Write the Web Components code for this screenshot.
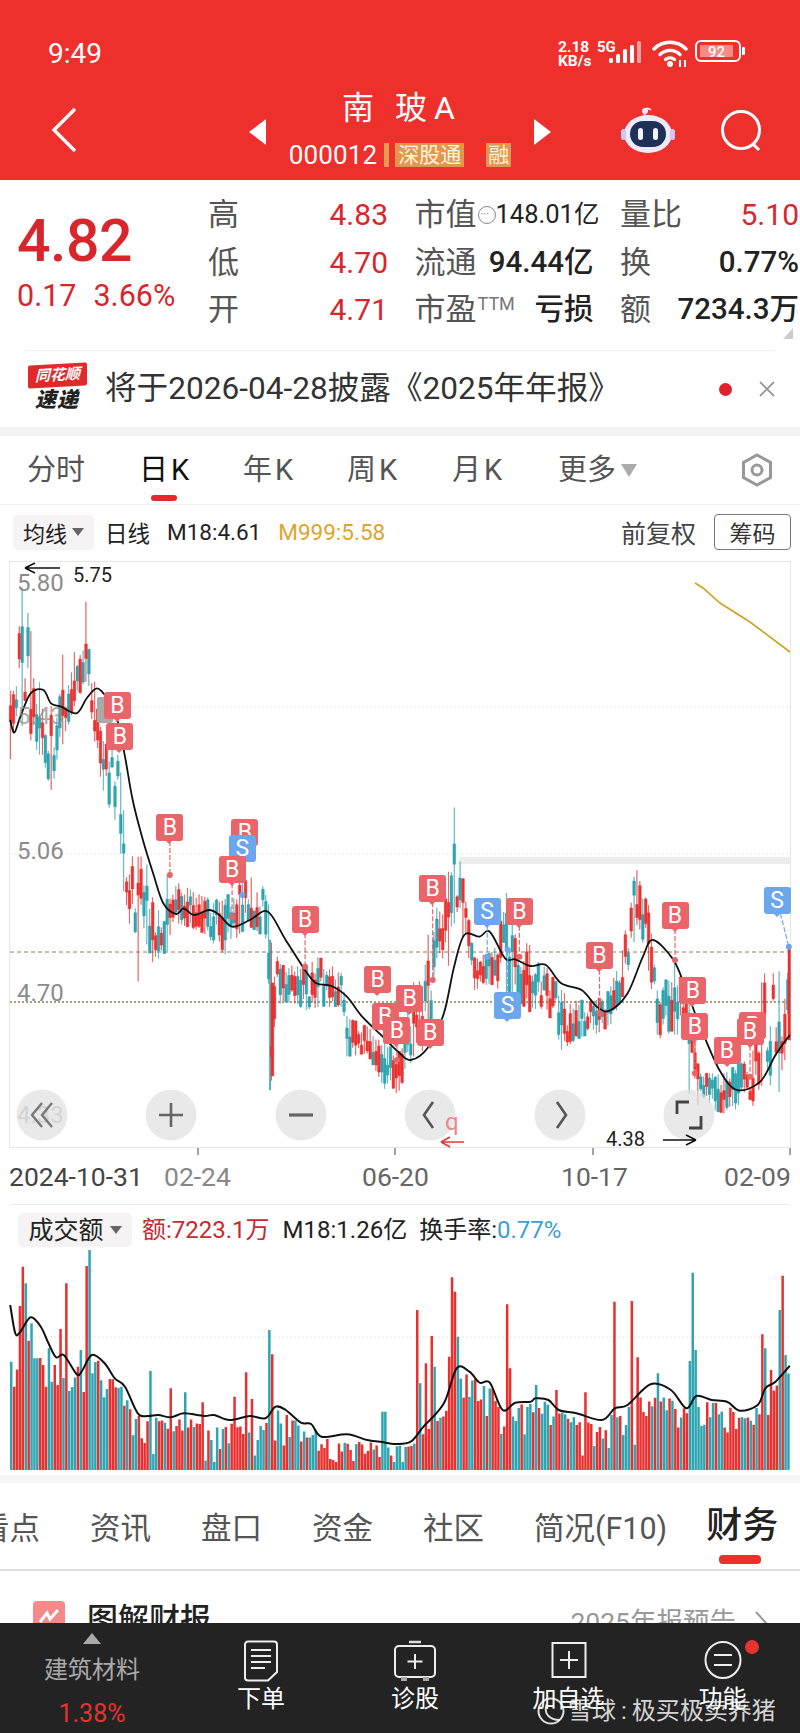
<!DOCTYPE html>
<html>
<head>
<meta charset="utf-8">
<style>
  html,body{margin:0;padding:0;background:#fff;}
  body{width:800px;height:1733px;overflow:hidden;display:flex;flex-direction:column;font-family:Roboto,"Noto Sans CJK SC",sans-serif;color:#333;}
</style>
</head>
<body>
<stock-header></stock-header>
<quote-panel></quote-panel>
<news-bar></news-bar>
<period-tabs></period-tabs>
<kline-toolbar></kline-toolbar>
<kline-chart></kline-chart>
<volume-panel></volume-panel>
<section-tabs></section-tabs>
<section-peek></section-peek>
<bottom-bar></bottom-bar>
<script>
class stockHeader extends HTMLElement{
  constructor(){
    super();
    this.attachShadow({mode:"open"});
    this.shadowRoot.innerHTML = `
    <style>
      :host{display:block;height:180px;background:#ee302d;color:#fff;flex:none;}
      .status{height:85px;box-sizing:border-box;padding:37px 55px 0 48px;display:flex;justify-content:space-between;align-items:flex-start;}
      .time{font-size:28px;line-height:33px;color:#fff;}
      .sys{display:flex;align-items:flex-start;margin-top:3px;}
      .speed{font-size:15.5px;font-weight:700;line-height:13.5px;margin-top:1px;width:39px;}
      .fiveg{font-size:15px;font-weight:700;line-height:13px;margin-top:1px;width:19px;}
      .nav{height:95px;display:grid;grid-template-columns:230px 340px 230px;}
      .back{padding:22px 0 0 50px;}
      .mid{display:flex;flex-direction:column;align-items:center;position:relative;}
      .name{font-size:32px;line-height:44px;white-space:pre;margin:1px 0 0 -3px;display:flex;}
      .name span:nth-child(1){margin-right:21px;}
      .name span:nth-child(2){margin-right:7px;}
      .code{display:flex;align-items:center;margin-top:10px;}
      .num{font-size:26px;line-height:30px;letter-spacing:.1px;}
      .bar{width:5px;height:24px;background:#e89a4f;margin:0 6px 0 7px;}
      .tag{background:#e0974f;color:#fff3dc;font-size:21px;line-height:24px;height:24px;padding:0 3px;}
      .tag.r{margin-left:22px;padding:0 2px;}
      .arr{position:absolute;top:34px;width:0;height:0;border-top:13px solid transparent;border-bottom:13px solid transparent;}
      .arr.l{left:19px;border-right:17px solid #fff;}
      .arr.rr{left:304px;border-left:17px solid #fff;}
      .right{display:flex;align-items:flex-start;padding:20px 0 0 48px;}
    </style>
    <div class="status">
      <span class="time">9:49</span>
      <div class="sys">
        <div class="speed">2.18<br>KB/s</div>
        <span class="fiveg">5G</span>
        <svg width="33" height="24" viewBox="0 0 33 24" style="margin-left:-7px"><g fill="#fff"><rect x="0" y="18" width="4" height="5" rx="1.5"/><rect x="7" y="14" width="4" height="9" rx="1.5"/><rect x="14" y="9" width="4" height="14" rx="1.5"/><rect x="21" y="5" width="4" height="18" rx="1.5"/><rect x="28" y="1" width="4" height="22" rx="1.5" opacity=".55"/></g></svg>
        <svg width="38" height="28" viewBox="0 0 38 28" style="margin-left:10px"><g fill="none" stroke="#fff" stroke-width="3.4" stroke-linecap="round"><path d="M2 9C11 0 25 0 34 9"/><path d="M8 14.5C14 9 22 9 28 14.5"/><path d="M13.5 19.5C16 17.5 20 17.5 22.5 19.5"/></g><circle cx="18" cy="24" r="3" fill="#fff"/><path d="M28 20v7M33 20v7" stroke="#fff" stroke-width="2"/></svg>
        <svg width="50" height="22" viewBox="0 0 50 22" style="margin-left:5px"><rect x="1" y="1" width="44" height="20" rx="5" fill="none" stroke="#fff" stroke-width="2"/><rect x="5" y="5" width="33" height="12" fill="#f78a86"/><rect x="47" y="7" width="3" height="8" rx="1" fill="#fff"/><text x="21.500" y="16.500" font-size="15" font-weight="500" text-anchor="middle" fill="#fff" font-family="Roboto">92</text></svg>
      </div>
    </div>
    <div class="nav">
      <div class="back"><svg width="30" height="46" viewBox="0 0 30 46"><path d="M25 2L4 23L25 44" fill="none" stroke="#fff" stroke-width="3.400"/></svg></div>
      <div class="mid">
        <span class="arr l"></span><span class="arr rr"></span>
        <div class="name"><span>南</span><span>玻</span><span>A</span></div>
        <div class="code"><span class="num">000012</span><span class="bar"></span><span class="tag">深股通</span><span class="tag r">融</span></div>
      </div>
      <div class="right">
        <svg width="60" height="54" viewBox="0 0 60 54"><path d="M27 10c-3-6 2-8 6-5" fill="none" stroke="#e4dcf6" stroke-width="2"/><circle cx="27" cy="6" r="3" fill="#efeaf9"/><ellipse cx="30" cy="29" rx="24" ry="19" fill="#efeaf9"/><rect x="3" y="24" width="5" height="11" rx="2.500" fill="#cfc8ee"/><rect x="52" y="24" width="5" height="11" rx="2.500" fill="#cfc8ee"/><rect x="12" y="16" width="36" height="26" rx="13" fill="#1f3058"/><rect x="20" y="23" width="5" height="12" rx="2.500" fill="#f2f2fb"/><rect x="35" y="23" width="5" height="12" rx="2.500" fill="#f2f2fb"/></svg>
        <svg width="48" height="48" viewBox="0 0 48 48" style="margin-left:40px;margin-top:2px"><circle cx="23" cy="23" r="18.500" fill="none" stroke="#fff" stroke-width="3"/><path d="M35 37L41 43" stroke="#fff" stroke-width="3"/></svg>
      </div>
    </div>`;
  }
}
customElements.define("stock-header", stockHeader);

class quotePanel extends HTMLElement{
  constructor(){
    super();
    this.attachShadow({mode:"open"});
    const rows = [
      ["高","4.83","市值<i></i>","148.01亿","量比","5.10"],
      ["低","4.70","流通","94.44亿","换","0.77%"],
      ["开","4.71","市盈<sup>TTM</sup>","亏损","额","7234.3万"]
    ];
    let cells = "";
    rows.forEach((r,i)=>{
      cells += `<div class="cell"><span class="lb">${r[0]}</span><span class="red">${r[1]}</span></div>
      <div class="cell"><span class="lb">${r[2]}</span><span class="val ${i==0?'sm':''}">${r[3]}</span></div>
      <div class="cell"><span class="lb">${r[4]}</span><span class="${i==0?'red':'val'}">${r[5]}</span></div>`;
    });
    this.shadowRoot.innerHTML = `
    <style>
      :host{display:flex;height:171px;flex:none;position:relative;box-sizing:border-box;}
      .left{width:208px;box-sizing:border-box;padding:28px 0 0 17px;color:#d8262c;}
      .price{font-size:59px;line-height:66px;font-weight:500;letter-spacing:-.5px;}
      .chg{font-size:30.500px;line-height:38px;white-space:nowrap;margin-top:3px;}
      .chg span{margin-left:17px;}
      .grid{display:grid;grid-template-columns:180px 179px 179px;column-gap:26.500px;grid-auto-rows:47.500px;padding-top:11px;width:592px;}
      .cell{display:flex;justify-content:space-between;align-items:center;line-height:47px;white-space:nowrap;}
      .lb{color:#555;display:flex;align-items:center;font-size:31px;}
      .red{color:#d8262c;font-size:30px;}
      .val{color:#222;font-size:29.500px;font-weight:500;}
      .val.sm{font-size:25.500px;font-weight:400;}
      i{display:inline-block;width:18px;height:18px;border:1px solid #888;border-radius:50%;margin-left:1px;box-sizing:border-box;position:relative;}
      i::after{content:"···";position:absolute;left:2px;top:-15px;font-size:11px;font-style:normal;color:#777;line-height:46px;}
      sup{font-size:18px;line-height:18px;color:#777;align-self:flex-start;margin-top:9px;margin-left:1px;}
      .corner{position:absolute;left:783px;top:148px;width:0;height:0;border-bottom:11px solid #ccc;border-left:10px solid transparent;}
      .rule{position:absolute;left:25px;right:25px;bottom:0;height:1px;background:#eee;}
    </style>
    <div class="left">
      <div class="price">4.82</div>
      <div class="chg">0.17<span>3.66%</span></div>
    </div>
    <div class="grid">${cells}</div>
    <span class="corner"></span><span class="rule"></span>`;
  }
}
customElements.define("quote-panel", quotePanel);

class newsBar extends HTMLElement{
  constructor(){
    super();
    this.attachShadow({mode:"open"});
    this.shadowRoot.innerHTML = `
    <style>
      :host{display:flex;align-items:center;height:76px;flex:none;box-sizing:border-box;padding:0 24px 0 27px;}
      .logo{width:60px;display:flex;flex-direction:column;align-items:center;margin-top:-1px;}
      .top{background:#e1292c;color:#fff;font-size:15px;line-height:23px;font-weight:700;font-style:italic;width:59px;text-align:center;transform:skewY(-3deg);border-radius:2px;}
      .bot{color:#222;font-size:21px;line-height:27px;font-weight:900;font-style:italic;letter-spacing:1px;}
      .txt{font-size:31.600px;color:#333;margin-left:18px;white-space:nowrap;flex:1;line-height:40px;}
      .dot{width:13px;height:13px;background:#e0202c;border-radius:50%;margin-right:26px;}
    </style>
    <div class="logo"><span class="top">同花顺</span><span class="bot">速递</span></div>
    <span class="txt">将于2026-04-28披露《2025年年报》</span>
    <span class="dot"></span>
    <svg width="18" height="18" viewBox="0 0 18 18"><path d="M2 2L16 16M16 2L2 16" stroke="#999" stroke-width="1.800"/></svg>`;
  }
}
customElements.define("news-bar", newsBar);

class periodTabs extends HTMLElement{
  constructor(){
    super();
    this.attachShadow({mode:"open"});
    this.shadowRoot.innerHTML = `
    <style>
      :host{display:block;flex:none;height:78px;box-sizing:border-box;border-top:9px solid #f5f5f5;border-bottom:1px solid #eee;position:relative;}
      .row{display:grid;grid-template-columns:112px 104px 104px 105px 106px 170px 1fr;padding-left:27px;height:68px;align-items:center;font-size:29px;color:#555;}
      b{font-weight:400;color:#111;position:relative;}
      .row span,.row b{line-height:68px;white-space:nowrap;}
      em{font-style:normal;margin-left:3px;}
      b::after{content:"";position:absolute;left:12px;top:59px;width:26px;height:6px;border-radius:3px;background:#e5282c;}
      .tri{display:inline-block;width:0;height:0;border-left:8px solid transparent;border-right:8px solid transparent;border-top:13px solid #aaa;margin-left:5px;vertical-align:3px;}
      svg{margin-left:11px;}
    </style>
    <div class="row">
      <span>分时</span><b>日<em>K</em></b><span>年<em>K</em></span><span>周<em>K</em></span><span>月<em>K</em></span>
      <span>更多<i class="tri"></i></span>
      <svg width="36" height="36" viewBox="0 0 36 36"><path d="M18 3L31.500 10.500V25.500L18 33L4.500 25.500V10.500Z" fill="none" stroke="#999" stroke-width="3"/><circle cx="18" cy="18" r="5" fill="none" stroke="#999" stroke-width="3"/></svg>
    </div>`;
  }
}
customElements.define("period-tabs", periodTabs);

class klineToolbar extends HTMLElement{
  constructor(){
    super();
    this.attachShadow({mode:"open"});
    this.shadowRoot.innerHTML = `
    <style>
      :host{display:flex;align-items:center;flex:none;height:56px;box-sizing:border-box;padding:0 9px 2px 13px;font-size:22.500px;color:#222;white-space:nowrap;}
      .sel{background:#f5f3f3;border-radius:5px;width:81px;height:35px;display:flex;align-items:center;justify-content:center;font-size:22px;box-sizing:border-box;}
      .sel i{width:0;height:0;border-left:6px solid transparent;border-right:6px solid transparent;border-top:8px solid #666;margin-left:5px;}
      .a{margin-left:11px;}
      .b{margin-left:17px;}
      .g{margin-left:17px;color:#e0a32e;flex:1;}
      .c{color:#444;font-size:25px;margin-right:18px;}
      .btn{border:1px solid #777;border-radius:4px;width:77px;height:36px;display:flex;align-items:center;justify-content:center;box-sizing:border-box;font-size:23px;color:#333;}
    </style>
    <span class="sel">均线<i></i></span>
    <span class="a">日线</span><span class="b">M18:4.61</span><span class="g">M999:5.58</span>
    <span class="c">前复权</span><span class="btn">筹码</span>`;
  }
}
customElements.define("kline-toolbar", klineToolbar);

// seeded random so the picture stays the same every run
function makeRand(seed){
  return function(){
    seed = (seed*1664525 + 1013904223) % 4294967296;
    return seed/4294967296;
  };
}
function lerpAt(list, x, idx){
  if(x <= list[0][0]) return list[0][idx];
  for(let i=1;i<list.length;i++){
    if(x <= list[i][0]){
      const a = list[i-1], b = list[i];
      return a[idx] + (b[idx]-a[idx])*(x-a[0])/(b[0]-a[0]);
    }
  }
  return list[list.length-1][idx];
}
function smoothPath(pts){
  let d = "M"+pts[0][0].toFixed(1)+" "+pts[0][1].toFixed(1);
  for(let i=1;i<pts.length;i++){
    const p0 = pts[i-2]||pts[i-1], p1 = pts[i-1], p2 = pts[i], p3 = pts[i+1]||p2;
    const c1x = p1[0]+(p2[0]-p0[0])/6, c1y = p1[1]+(p2[1]-p0[1])/6;
    const c2x = p2[0]-(p3[0]-p1[0])/6, c2y = p2[1]-(p3[1]-p1[1])/6;
    d += "C"+c1x.toFixed(1)+" "+c1y.toFixed(1)+" "+c2x.toFixed(1)+" "+c2y.toFixed(1)+" "+p2[0].toFixed(1)+" "+p2[1].toFixed(1);
  }
  return d;
}

class klineChart extends HTMLElement{
  constructor(){
    super();
    this.attachShadow({mode:"open"});
    // envelope of the candles: [x, top, bottom] in page pixels
    const e2 = [[20,760,960],[45,420,850],[60,570,900],[80,750,950],[100,800,1050],[125,630,900],[145,640,800],[170,475,720],[185,720,900],[200,900,1040],[235,950,1200]]
      .map(p=>[p[0]/1.96,440+p[1]/3,440+p[2]/3]);
    const e3 = [[240,-100,130],[270,50,430],[285,50,300],[300,180,370],[330,100,330],[350,130,250],[400,170,280],[440,180,345],[470,110,280],[490,110,260],[525,150,300],[530,300,750],[550,375,480],[600,380,510],[625,350,500],[670,400,500],[680,530,650],[720,560,640],[755,600,750],[780,650,760],[810,430,650],[840,280,620],[880,90,370],[890,-100,250],[910,150,300],[930,350,450],[960,340,430],[990,145,460],[1005,230,470],[1040,320,520],[1070,380,500],[1100,450,630],[1140,480,590],[1170,480,580],[1195,450,560],[1220,330,470],[1240,120,330],[1250,85,240],[1270,180,380],[1290,480,605],[1320,360,570],[1350,450,760],[1370,700,800],[1420,700,820],[1475,640,800],[1495,400,730],[1525,400,770],[1548,320,600]]
      .map(p=>[p[0]/1.96,840+p[1]/3,840+p[2]/3]);
    const env = e2.concat(e3);
    const r = makeRand(77);
    let red = "", teal = "";
    for(let i=0;i<269;i++){
      const x = 10.500 + i*2.900;
      const top = lerpAt(env,x,1), bot = lerpAt(env,x,2);
      const span = bot-top;
      const mid = top + span*(.15+r()*.7);
      const h = 8 + r()*Math.min(30,span*.5);
      const y1 = Math.max(top,mid-h/2), y2 = Math.min(bot,mid+h/2);
      const near = env.some(p=>Math.abs(p[0]-x)<1.500);
      const w1 = near ? top : Math.max(top,y1-r()*18);
      const w2 = near ? bot : Math.min(bot,y2+r()*18);
      const bar = `M${x.toFixed(1)} ${w1.toFixed(1)}V${w2.toFixed(1)}h.1V${w1.toFixed(1)}Z`;
      const body = `M${(x-1.200).toFixed(1)} ${y1.toFixed(1)}h2.600V${y2.toFixed(1)}h-2.600Z`;
      if(r()<.56) red += bar+body; else teal += bar+body;
    }
    // the big drop and the last up day
    red += "M271 983h2.800V1076h-2.800Z";
    teal += "M269.500 940h1.200V1090h-1.200Z";
    red += "M788 948h2.400V1040h-2.400Z";
    const ma = [[20,840],[28,878],[40,830],[60,760],[85,750],[100,790],[120,800],[150,820],[170,775],[190,745],[210,775],[230,840],[245,950],[260,1080],[280,1200]]
      .map(p=>[p[0]/1.96,440+p[1]/3])
      .concat([[300,100],[320,190],[345,222],[360,205],[380,225],[410,210],[430,225],[455,260],[490,240],[525,215],[560,300],[600,395],[620,430],[650,438],[680,470],[710,530],[750,590],[780,635],[805,660],[840,620],[870,520],[890,380],[910,285],[940,290],[960,275],[990,355],[1010,358],[1040,378],[1070,375],[1100,430],[1140,450],[1170,500],[1195,512],[1230,460],[1260,350],[1280,300],[1320,360],[1345,450],[1370,550],[1410,690],[1445,750],[1490,725],[1520,645],[1548,585]].map(p=>[p[0]/1.96,840+p[1]/3]));
    // markers: letter, x, y of centre, y of the pin end
    const z = (x,y)=>[x/1.96,840+y/3];
    const marks = [
      ["B",230,-405,null],["B",235,-312,null],["B",333,-39,105],["B",480,-24,null],["S",475,25,165],["B",455,88,230],
      ["B",598,238,380],["B",803,475,null],["B",740,418,null],["B",755,530,null],["B",843,578,null],["B",778,572,660],["B",848,145,420],
      ["S",955,215,350],["B",1018,215,350],["S",995,495,330],["B",1175,347,520],["B",1323,225,360],
      ["B",1358,452,null],["B",1362,560,700],["B",1425,630,null],["B",1475,556,null],["B",1470,575,710],["S",1523,180,320]
    ];
    let pins = "", badges = "";
    marks.forEach(m=>{
      const p = z(m[1],m[2]);
      const col = m[0]=="B" ? "#e9656a" : "#6ca6ec";
      if(m[3]!==null){
        const e = z(m[1],m[3]);
        const ex = m[1]==1523 ? 1546/1.96 : p[0];
        pins += `<path d="M${p[0].toFixed(1)} ${p[1].toFixed(1)}L${ex.toFixed(1)} ${e[1].toFixed(1)}" stroke="${col}" stroke-width="1.200" stroke-dasharray="5 2"/><circle cx="${ex.toFixed(1)}" cy="${e[1].toFixed(1)}" r="3" fill="${col}"/>`;
      }
      badges += `<span class="mk ${m[0]}" style="left:${(p[0]-13.500).toFixed(1)}px;top:${(p[1]-13.500-561).toFixed(1)}px">${m[0]}</span>`;
    });
    const circles = [42,171,301,430,560,689];
    const icons = [
      `<path d="M0 -12L-10 0L0 12M10 -12L0 0L10 12" fill="none" stroke="#777" stroke-width="2.400"/>`,
      `<path d="M-12 0H12M0 -12V12" stroke="#666" stroke-width="2.600"/>`,
      `<path d="M-12 0H12" stroke="#666" stroke-width="3.200"/>`,
      `<path d="M3 -13L-6 0L3 13" fill="none" stroke="#555" stroke-width="2.600"/>`,
      `<path d="M-3 -13L6 0L-3 13" fill="none" stroke="#555" stroke-width="2.600"/>`,
      `<path d="M-12 -1V-13H0M12 1V13H0" fill="none" stroke="#444" stroke-width="2.800"/>`
    ];
    let ctrl = "";
    circles.forEach((c,i)=>{
      ctrl += `<g transform="translate(${c} 1115)"><circle r="25.500" fill="#e0e0e0" fill-opacity=".72"/>${icons[i]}</g>`;
    });
    this.shadowRoot.innerHTML = `
    <style>
      :host{display:block;flex:none;position:relative;height:639px;width:800px;font-family:Roboto,"Noto Sans CJK SC",sans-serif;}
      svg{position:absolute;left:0;top:0;}
      .lab{position:absolute;left:17px;font-size:24px;line-height:28px;color:#8b8b8b;}
      .mk{position:absolute;width:27px;height:27px;border-radius:3px;color:#fff;font-size:23px;line-height:27px;text-align:center;}
      .mk::after{content:"";position:absolute;left:9px;top:26px;border-left:4.500px solid transparent;border-right:4.500px solid transparent;border-top:4px solid transparent;}
      .mk.B{background:#e9656a;}
      .mk.B::after{border-top-color:#e9656a;}
      .mk.S{background:#6ca6ec;}
      .mk.S::after{border-top-color:#6ca6ec;}
      .ann{position:absolute;font-size:20px;line-height:24px;color:#222;}
      .q{position:absolute;left:445px;top:547px;font-size:24px;line-height:28px;color:#e88a8a;}
      .axis{position:absolute;top:602px;font-size:26.500px;line-height:28px;color:#666;}
      .smudge{position:absolute;left:97px;top:136px;width:16px;height:26px;background:#aaa;border-radius:2px;}
    </style>
    <svg width="800" height="639" viewBox="0 561 800 639">
      <rect x="9.500" y="561.500" width="781" height="586" fill="none" stroke="#e6e6e6"/>
      <path d="M10 707H790M10 854H790" stroke="#e8e8e8" stroke-dasharray="2 2"/>
      <path d="M10 952H790" stroke="#8d7e57" stroke-dasharray="4 3"/>
      <path d="M10 1002H790" stroke="#8d7e57" stroke-width="1.400" stroke-dasharray="2 2"/>
      <rect x="459" y="857" width="331" height="7" fill="#ececec"/>
      <path d="${teal}" fill="#2ba3b0" stroke="#2ba3b0" stroke-width=".5"/>
      <path d="${red}" fill="#e9302f" stroke="#e9302f" stroke-width=".5"/>
      <path d="${smoothPath(ma)}" fill="none" stroke="#111" stroke-width="1.800"/>
      <path d="M695 583L703 588L720 603L750 622L790 652" fill="none" stroke="#cfa023" stroke-width="1.600"/>
      ${pins}
    </svg>
    <span class="lab" style="top:8px">5.80</span>
    <span class="lab" style="top:141px;opacity:.7">5.43</span>
    <span class="lab" style="top:276px">5.06</span>
    <span class="lab" style="top:418px">4.70</span>
    <span class="lab" style="top:540px;opacity:.7">4.33</span>
    <span class="smudge"></span>
    ${badges}
    <svg width="800" height="639" viewBox="0 561 800 639">
      ${ctrl}
      <path d="M25 568H60M25 568L35 563M25 568L35 573" fill="none" stroke="#111" stroke-width="1.500"/>
      <path d="M663 1140H696M696 1140L686 1135M696 1140L686 1145" fill="none" stroke="#111" stroke-width="1.500"/>
      <path d="M441 1142H464M441 1142L450 1137M441 1142L450 1147" fill="none" stroke="#e33" stroke-width="1.500"/>
      <path d="M198 1148V1155M395 1148V1155M593 1148V1155M790 1148V1155" stroke="#666" stroke-width="1.200"/>
    </svg>
    <span class="ann" style="left:73px;top:2px">5.75</span>
    <span class="ann" style="left:606px;top:566px">4.38</span>
    <span class="q">q</span>
    <span class="axis" style="left:9px;color:#444">2024-10-31</span>
    <span class="axis" style="left:164px;color:#888">02-24</span>
    <span class="axis" style="left:362px">06-20</span>
    <span class="axis" style="left:561px">10-17</span>
    <span class="axis" style="left:724px">02-09</span>`;
  }
}
customElements.define("kline-chart", klineChart);

class volumePanel extends HTMLElement{
  constructor(){
    super();
    this.attachShadow({mode:"open"});
    const maLine = [[20,315],[30,400],[40,395],[60,352],[80,380],[95,430],[110,472],[125,465],[150,522],[160,515],[180,465],[205,490],[225,535],[245,560],[270,640],[290,648],[310,645],[335,652],[360,640],[400,648],[420,645],[450,660],[490,648],[520,655],[540,620],[560,630],[590,668],[610,672],[630,710],[680,703],[720,720],[745,725],[775,732],[805,725],[830,680],[870,610],[895,505],[920,515],[940,548],[960,548],[985,630],[1010,608],[1040,605],[1050,595],[1075,600],[1095,630],[1130,640],[1180,660],[1205,625],[1230,615],[1275,553],[1315,570],[1345,625],[1365,588],[1395,600],[1425,605],[1450,632],[1485,615],[1500,565],[1520,545],[1548,497]];
    const pt = p=>[p[0]/1.96,p[1]/3];
    const ma = maLine.map(pt);
    const spikes = [[18,383,"r"],[22,485,"t"],[28,560,"r"],[38,318,"r"],[44,200,"r"],[48,250,"t"],[58,370,"t"],[68,475,"t"],[80,495,"r"],[88,560,"r"],[98,545,"t"],[112,555,"r"],[118,387,"r"],[125,250,"r"],[135,573,"t"],[150,500,"r"],[157,450,"t"],[167,198,"r"],[171,150,"t"],[180,520,"t"],[200,592,"t"],[295,513,"t"],[333,565,"r"],[358,577,"t"],[397,607,"r"],[455,590,"r"],[480,517,"r"],[490,597,"r"],[528,390,"t"],[533,463,"r"],[750,635,"t"],[813,330,"r"],[822,550,"t"],[833,490,"r"],[843,408,"r"],[848,500,"t"],[878,470,"r"],[882,232,"r"],[887,222,"t"],[892,275,"r"],[897,410,"t"],[990,313,"r"],[995,505,"r"],[1050,555,"t"],[1088,570,"r"],[1147,577,"r"],[1200,305,"r"],[1235,303,"r"],[1245,472,"r"],[1288,520,"t"],[1352,483,"t"],[1357,218,"t"],[1362,450,"t"],[1490,403,"r"],[1495,265,"r"],[1500,445,"t"],[1510,510,"r"],[1525,330,"t"],[1533,227,"r"],[1538,465,"t"],[1548,632,"r"]];
    const r = makeRand(2024);
    let red = "", teal = "";
    for(let i=0;i<269;i++){
      const x = 10 + i*2.900;
      let top = lerpAt(ma,x,1) + 2 + r()*r()*48;
      top = Math.min(top,262);
      let c = r()<.55 ? "r":"t";
      spikes.forEach(s=>{
        if(Math.abs(s[0]/1.96-x)<1.500){ top = s[1]/3; c = s[2]; }
      });
      const d = `M${x.toFixed(1)} ${top.toFixed(1)}h2.500V270h-2.500Z`;
      if(c=="r") red += d; else teal += d;
    }
    this.shadowRoot.innerHTML = `
    <style>
      :host{display:block;flex:none;height:275px;position:relative;box-sizing:border-box;}
      .line{position:absolute;left:10px;width:780px;top:4px;height:1px;background:#eaeaea;}
      .bar{position:absolute;left:18px;top:13px;display:flex;align-items:center;font-size:24px;white-space:nowrap;color:#222;line-height:33px;}
      .sel{background:#f5f3f3;border-radius:5px;width:114px;height:34px;display:flex;align-items:center;justify-content:center;box-sizing:border-box;font-size:25px;}
      .sel i{width:0;height:0;border-left:6px solid transparent;border-right:6px solid transparent;border-top:8px solid #666;margin-left:6px;}
      .r{color:#c52a2e;margin-left:10px;}
      .m{margin-left:13px;}
      .t{margin-left:12px;}
      .t b{font-weight:400;color:#3c9fd6;}
      svg{position:absolute;left:0;top:0;}
    </style>
    <svg width="800" height="275" viewBox="0 0 800 275">
      <path d="M10 137H790" stroke="#e6e6e6" stroke-dasharray="2 2"/>
      <path d="${teal}" fill="#2fa5b2"/>
      <path d="${red}" fill="#e9302f"/>
      <path d="${smoothPath(ma)}" fill="none" stroke="#111" stroke-width="2"/>
    </svg>
    <span class="line"></span>
    <div class="bar">
      <span class="sel">成交额<i></i></span>
      <span class="r">额:7223.1万</span><span class="m">M18:1.26亿</span><span class="t">换手率:<b>0.77%</b></span>
    </div>`;
  }
}
customElements.define("volume-panel", volumePanel);

class sectionTabs extends HTMLElement{
  constructor(){
    super();
    this.attachShadow({mode:"open"});
    this.shadowRoot.innerHTML = `
    <style>
      :host{display:flex;flex:none;height:96px;box-sizing:border-box;border-top:8px solid #f6f6f6;border-bottom:2px solid #ddd;overflow:hidden;width:800px;align-items:center;font-size:30.500px;color:#555;white-space:nowrap;position:relative;}
      .row{display:flex;margin-left:-21px;align-items:center;height:85px;}
      .row span{margin-right:50px;}
      b{font-size:36px;font-weight:500;color:#222;margin-left:-6px;position:relative;line-height:50px;margin-top:-1px;}
      b::after{content:"";position:absolute;left:13px;top:54px;width:42px;height:9px;border-radius:4px;background:#ee302d;}
    </style>
    <div class="row">
      <span>看点</span><span>资讯</span><span>盘口</span><span>资金</span><span>社区</span><span style="margin-right:45px">简况(F10)</span><b>财务</b>
    </div>`;
  }
}
customElements.define("section-tabs", sectionTabs);

class sectionPeek extends HTMLElement{
  constructor(){
    super();
    this.attachShadow({mode:"open"});
    this.shadowRoot.innerHTML = `
    <style>
      :host{display:flex;flex:none;height:52px;overflow:hidden;box-sizing:border-box;padding:30px 32px 0 33px;align-items:flex-start;}
      svg{flex:none;}
      .t{font-size:31px;line-height:38px;font-weight:500;color:#222;margin-left:22px;flex:1;white-space:nowrap;}
      .m{font-size:26.500px;line-height:38px;color:#999;white-space:nowrap;margin-top:2px;}
    </style>
    <svg width="32" height="32" viewBox="0 0 32 32"><rect width="32" height="32" rx="4" fill="#f58a8a"/><path d="M7 21L14 12L17 18L25 9" fill="none" stroke="#fff" stroke-width="3"/></svg>
    <span class="t">图解财报</span>
    <span class="m">2025年报预告</span>
    <svg width="14" height="26" viewBox="0 0 14 26" style="margin:9px 0 0 18px"><path d="M2 2L12 13L2 24" fill="none" stroke="#999" stroke-width="2"/></svg>`;
  }
}
customElements.define("section-peek", sectionPeek);

class bottomBar extends HTMLElement{
  constructor(){
    super();
    this.attachShadow({mode:"open"});
    this.shadowRoot.innerHTML = `
    <style>
      :host{display:grid;grid-template-columns:184px 154px 154px 153px 155px;flex:none;height:110px;background:#232323;position:relative;color:#fff;font-size:24px;}
      .ind{display:flex;flex-direction:column;align-items:center;}
      .tri{width:0;height:0;border-left:9px solid transparent;border-right:9px solid transparent;border-top:0;border-bottom:11px solid #aaa;margin-top:10px;}
      .ind .n{color:#aaa;font-size:24px;line-height:34px;margin-top:9px;}
      .ind .p{color:#e8322f;font-size:25px;line-height:32px;margin-top:11px;}
      .it{display:flex;flex-direction:column;align-items:center;padding-top:17px;box-sizing:border-box;}
      .it svg{height:42px;flex:none;}
      .it span{line-height:32px;margin-top:1px;white-space:nowrap;}
      .dot{position:absolute;left:745px;top:17px;width:14px;height:14px;border-radius:50%;background:#e8322f;}
      .wm{position:absolute;left:536px;top:70px;display:flex;align-items:center;font-size:24px;color:rgba(255,255,255,.82);white-space:nowrap;line-height:30px;}
      .wm svg{margin-right:2px;}
      .wm i{font-style:normal;margin:0 5px;}
    </style>
    <div class="ind"><span class="tri"></span><span class="n">建筑材料</span><span class="p">1.38%</span></div>
    <div class="it"><svg width="36" viewBox="0 0 36 42"><path d="M5 1.500H31a3 3 0 0 1 3 3V32L25 40.500H5a3 3 0 0 1-3-3V4.500a3 3 0 0 1 3-3Z" fill="none" stroke="#eee" stroke-width="2"/><path d="M8 10H28M8 16H28M8 22H28M8 28H22" stroke="#eee" stroke-width="2"/></svg><span>下单</span></div>
    <div class="it"><svg width="44" viewBox="0 0 44 42"><path d="M16 2H28" stroke="#ddd" stroke-width="2.500"/><rect x="2" y="6" width="40" height="31" rx="4" fill="none" stroke="#eee" stroke-width="2"/><path d="M22 14V29M14.500 21.500H29.500" stroke="#eee" stroke-width="2"/><path d="M8 37H14V41H8ZM30 37H36V41H30Z" fill="#aaa"/></svg><span>诊股</span></div>
    <div class="it"><svg width="36" viewBox="0 0 36 42"><rect x="1.500" y="3" width="33" height="34" fill="none" stroke="#eee" stroke-width="2"/><path d="M18 11V29M9 20H27" stroke="#eee" stroke-width="2"/></svg><span>加自选</span></div>
    <div class="it"><svg width="38" viewBox="0 0 38 42"><ellipse cx="19" cy="20" rx="17.500" ry="18" fill="none" stroke="#eee" stroke-width="2"/><path d="M10 15H28M10 25H28" stroke="#eee" stroke-width="2"/></svg><span>功能</span></div>
    <span class="dot"></span>
    <div class="wm"><svg width="30" height="36" viewBox="0 0 30 36"><circle cx="15" cy="18" r="12.500" fill="none" stroke="rgba(255,255,255,.85)" stroke-width="2"/><path d="M11 11C7 20 13 27 24 27" fill="none" stroke="rgba(255,255,255,.85)" stroke-width="2"/></svg>雪球<i>:</i>极买极卖养猪</div>`;
  }
}
customElements.define("bottom-bar", bottomBar);
</script>
</body>
</html>
